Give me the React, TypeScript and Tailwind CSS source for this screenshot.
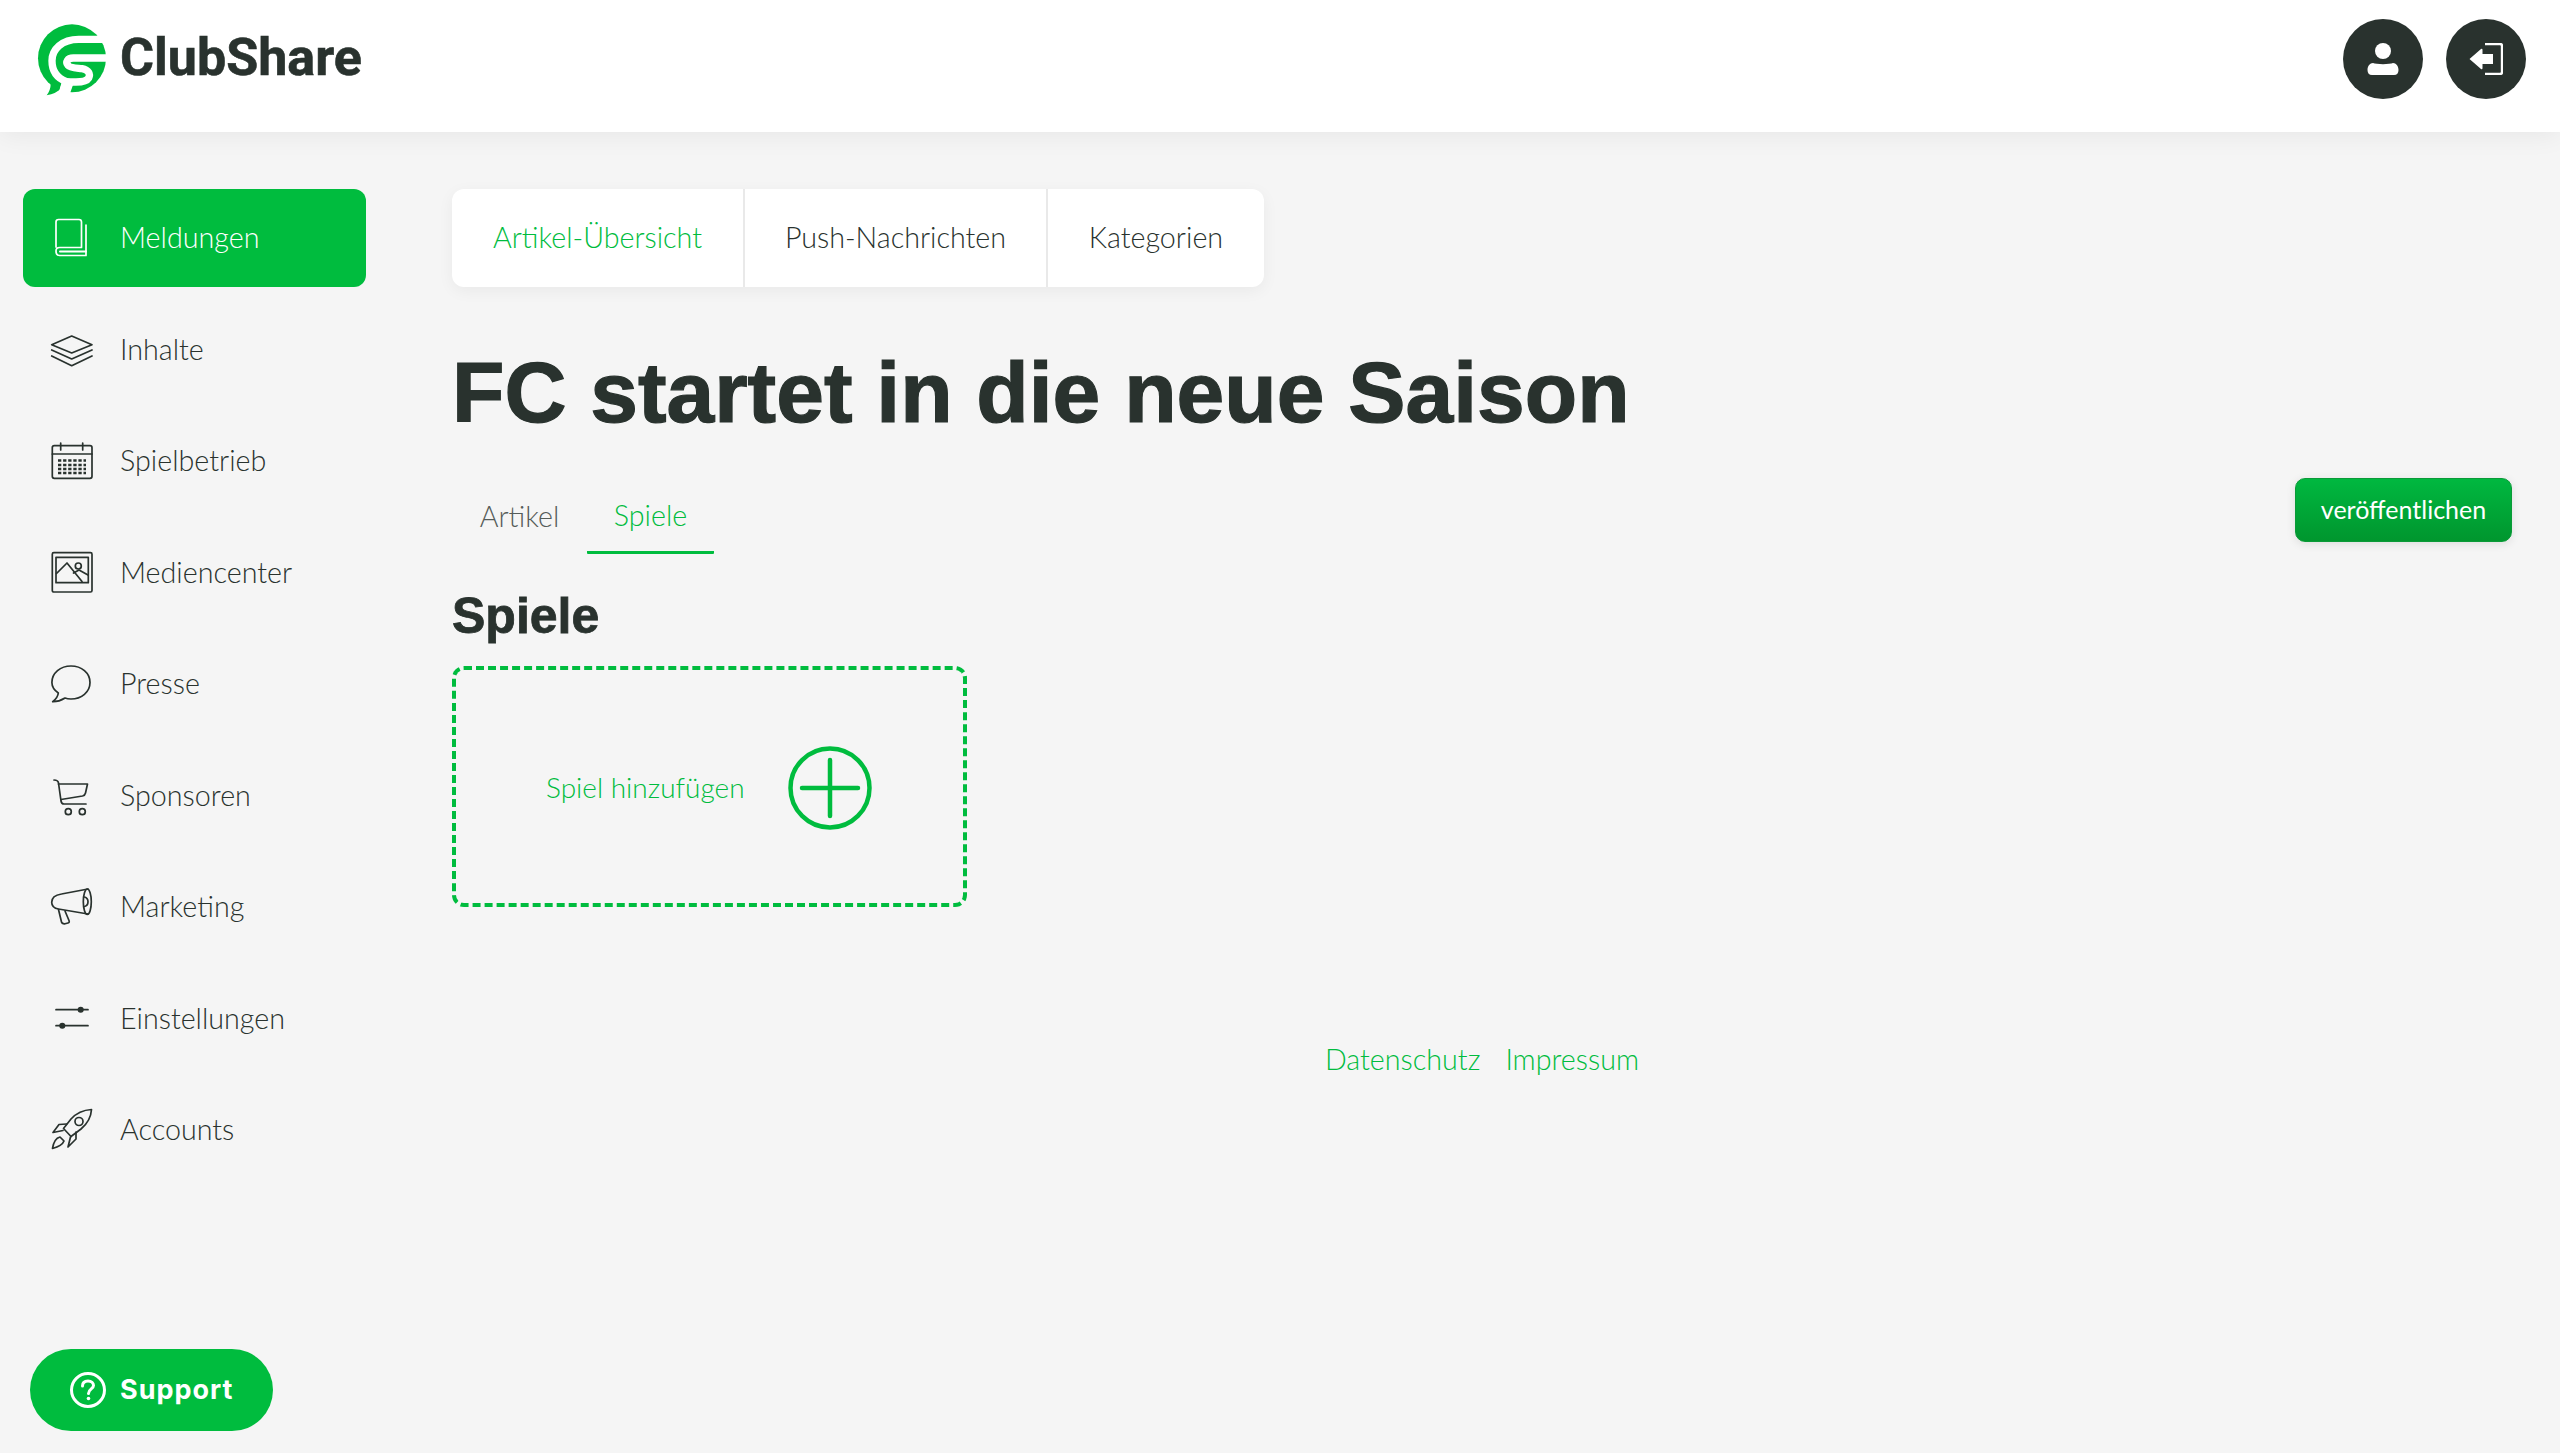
import React from "react";

const dark = "#29322e";

function Logo() {
  return (
    <svg width="100" height="100" viewBox="0 0 300 300" className="shrink-0">
      <circle cx="156" cy="145" r="102" fill="#00bc3e" />
      <path d="M118 205 L128 232 Q108 252 80 256 Q92 240 92 222 Z" fill="#00bc3e" />
      <g fill="none" stroke="#fff" strokeWidth="22">
        <path d="M270 88 H176 C126 88 96 118 96 152 C96 184 112 204 138 214 L124 262" />
        <path d="M270 144 H160 C142 144 136 156 144 166 C150 174 170 174 186 176 C206 180 212 192 206 204 C200 214 184 216 168 216 H138" />
      </g>
      <path d="M126 214 L112 262 H146 L160 222 Z" fill="#fff" />
    </svg>
  );
}

function Icon({ children, color }: { children: React.ReactNode; color: string }) {
  return (
    <svg width="44" height="44" viewBox="0 0 44 44" fill="none" stroke={color} strokeWidth="1.7" strokeLinejoin="round" strokeLinecap="round" className="shrink-0">
      {children}
    </svg>
  );
}

const icons: Record<string, React.ReactNode> = {
  Meldungen: (
    <>
      <path d="M6 31 V6 Q6 3.5 8.5 3.5 H29 Q31.500 3.500 31.500 6 V31.500 H9.500 Q6 31.500 6 35 Q6 39.500 9.500 39.500 H36 V9" />
      <path d="M10 35.500 H36" strokeWidth="2" />
    </>
  ),
  Inhalte: (
    <>
      <path d="M21.700 8 L42 16.700 L21.700 25 L1.700 16.700 Z" />
      <path d="M1.700 22 L21.700 31 L42 22" />
      <path d="M1.700 28 L21.700 37.700 L42 28" />
    </>
  ),
  Spielbetrieb: (
    <>
      <rect x="2.300" y="6.700" width="39.700" height="32.600" rx="2" />
      <path d="M2.300 15 H42" />
      <path d="M10.700 4 V11 M32.700 4 V11" />
      <path d="M8 21.500 H36 M8 26 H36 M8 30 H36 M8 34 H36" strokeWidth="2.400" strokeDasharray="3.300 1.800" strokeLinecap="butt" />
    </>
  ),
  Mediencenter: (
    <>
      <rect x="2.300" y="1.700" width="39.700" height="39.300" rx="1.500" />
      <rect x="6" y="6.300" width="32.300" height="25.400" />
      <path d="M6.500 22.500 L17 12 L32 30.500" />
      <path d="M23.500 22 L29 19 L38 24" />
      <circle cx="28.300" cy="15" r="3" />
    </>
  ),
  Presse: (
    <path d="M8.300 31 C4 28 1.900 24 1.900 20.500 C1.900 11 10.500 4 21 4 C31.500 4 40 11 40 20.500 C40 30 31.500 37 21 37 C19 37 17 36.800 15 36 C11 38.500 7 39.800 2.700 39.700 C5.500 37.500 8 34.500 8.300 31 Z" />
  ),
  Sponsoren: (
    <>
      <path d="M4 6 Q8 6 8.500 9 L11 27 Q11.500 30 14 30 H36" />
      <path d="M8.500 10 H37.500 L35.500 19 Q35 21.500 32.500 22 L11 25.500" />
      <circle cx="18.300" cy="37.700" r="3" />
      <circle cx="32.300" cy="37.700" r="3" />
    </>
  ),
  Marketing: (
    <>
      <path d="M38 4 L11.500 9 Q1.700 10.500 1.700 17.300 Q1.700 23 8.500 24 L38 29" />
      <ellipse cx="37.300" cy="16.700" rx="4" ry="12.700" />
      <path d="M34.500 12 Q38 13 38 16.700 Q38 20.500 34.500 21.500" />
      <path d="M8.500 24.500 L11.500 37 Q12 39 15 38.800 L18 38 Q19.800 37.500 19 35.500 L15 26" />
    </>
  ),
  Einstellungen: (
    <>
      <path d="M6 12.700 H38 M6 28.700 H38" />
      <circle cx="30.700" cy="12.700" r="2.200" fill={dark} />
      <circle cx="12.300" cy="28.700" r="2.200" fill={dark} />
    </>
  ),
  Accounts: (
    <>
      <path d="M41.500 1.500 C33 2 26 5.500 21 11 L13.500 20.500 L21 28.500 L31 21 C37 16 41 10 41.500 1.500 Z" />
      <circle cx="29" cy="13.500" r="4" />
      <path d="M16.500 16 L9 16.500 L3 24.500 L13 22.500" />
      <path d="M26 24 L26 31 L18 39 L20.500 29" />
      <path d="M10 29 C6 30 3.500 34 2.500 40.500 C8 39 12.500 37 14 33 Z" />
    </>
  ),
};

const items = ["Meldungen", "Inhalte", "Spielbetrieb", "Mediencenter", "Presse", "Sponsoren", "Marketing", "Einstellungen", "Accounts"];

function NavItem({ label, active }: { label: string; active?: boolean }) {
  return (
    <div className={`flex h-[98px] items-center rounded-[12px] pl-[27px] text-[28.700px] font-light ${active ? "bg-[#00bc3e] text-white" : "text-[#29322e]"}`}>
      <Icon color={active ? "#ffffff" : dark}>{icons[label]}</Icon>
      <span className="ml-[26px]">{label}</span>
    </div>
  );
}

export default function App() {
  return (
    <div className="relative flex h-screen flex-col overflow-hidden bg-[#f5f5f5] text-[#29322e] font-['Lato',sans-serif]">
      <header className="relative z-10 flex h-[132px] shrink-0 items-start justify-between bg-white pl-[20px] pr-[34px] shadow-[0_4px_24px_rgba(0,0,0,0.06)]">
        <div className="mt-[10px] flex h-[100px] items-center">
          <Logo />
          <span className="mb-[5px] font-['Roboto',sans-serif] text-[52px] font-bold text-[#29322e] [-webkit-text-stroke:0.6px_#29322e]">ClubShare</span>
        </div>
        <div className="mt-[19px] flex gap-[23px]">
          <div className="flex h-[80px] w-[80px] items-center justify-center rounded-full bg-[#29322e]">
            <svg width="32" height="34" viewBox="0 0 32 34" fill="#fff">
              <circle cx="16" cy="9" r="8" />
              <path d="M6 21 C9 22.500 23 22.500 26 21 C29 21 31.500 24 31.500 28 C31.500 31 30 33 27 33 H5 C2 33 .5 31 .5 28 C.5 24 3 21 6 21 Z" />
            </svg>
          </div>
          <div className="flex h-[80px] w-[80px] items-center justify-center rounded-full bg-[#29322e]">
            <svg width="34" height="32" viewBox="0 0 34 32" fill="#fff">
              <path d="M.5 16 L12 6 Q13.500 5 13.500 7 V11 H24 V21 H13.500 V25 Q13.500 27 12 26 Z" />
              <path d="M16 1 H31 Q33 1 33 3 V29 Q33 31 31 31 H16" fill="none" stroke="#fff" strokeWidth="2.400" />
            </svg>
          </div>
        </div>
      </header>

      <div className="flex min-h-0 flex-1">
        <nav className="flex w-[452px] shrink-0 flex-col gap-[13.500px] pl-[23px] pr-[86px] pt-[57px]">
          {items.map((l, i) => (
            <NavItem key={l} label={l} active={i === 0} />
          ))}
        </nav>

        <main className="flex min-w-0 flex-1 flex-col pr-[48px] pt-[57px]">
          <div className="flex h-[98px] w-[812px] rounded-[12px] bg-white text-[28.700px] font-light shadow-[0_4px_16px_rgba(0,0,0,0.05)]">
            <div className="flex w-[293px] items-center justify-center border-r-2 border-[#e9e9e9] text-[#00bc3e]">Artikel-Übersicht</div>
            <div className="flex w-[303px] items-center justify-center border-r-2 border-[#e9e9e9]">Push-Nachrichten</div>
            <div className="flex flex-1 items-center justify-center">Kategorien</div>
          </div>

          <h1 className="mt-[53px] h-[104px] font-['Liberation_Sans',sans-serif] text-[85.800px] font-bold leading-[104px] text-[#29322e] [-webkit-text-stroke:1.2px_#29322e]">FC startet in die neue Saison</h1>

          <div className="mt-[34px] flex items-start justify-between">
            <div className="flex text-[28.700px] font-light">
              <div className="flex h-[76px] w-[135px] items-center justify-center pt-[2px] text-[#555c59]">Artikel</div>
              <div className="flex h-[76px] w-[127px] items-center justify-center rounded-[1px] border-b-[3px] border-[#00bc3e] pt-[2px] text-[#00bc3e]">Spiele</div>
            </div>
            <button className="h-[64px] w-[217px] rounded-[10px] border border-[#0a9a38] bg-gradient-to-b from-[#00b840] to-[#00962e] text-[25px] text-white shadow-[0_2px_10px_rgba(0,0,0,0.1)]">veröffentlichen</button>
          </div>

          <h2 className="mt-[33px] font-['Liberation_Sans',sans-serif] text-[50px] font-bold leading-[58px] text-[#29322e] [-webkit-text-stroke:0.8px_#29322e]">Spiele</h2>

          <div className="mt-[21px] flex h-[241px] w-[515px] items-center rounded-[12px] border-4 border-dashed border-[#00bc3e] pl-[90px] text-[#00bc3e]">
            <span className="w-[242px] text-[28px] font-light">Spiel hinzufügen</span>
            <svg width="84" height="84" viewBox="0 0 84 84" fill="none" stroke="#00bc3e" strokeWidth="4.500" strokeLinecap="round" className="mt-[3px]">
              <circle cx="42" cy="42" r="39.500" />
              <path d="M14 42 H70 M42 14 V70" />
            </svg>
          </div>

          <div className="mt-[131px] flex justify-center gap-[25px] text-[28.700px] font-light text-[#00bc3e]">
            <span>Datenschutz</span>
            <span>Impressum</span>
          </div>
        </main>
      </div>

      <button className="absolute bottom-[22px] left-[30px] flex h-[82px] w-[243px] items-center rounded-full bg-[#00bc3e] pl-[39px] text-white">
        <svg width="38" height="38" viewBox="0 0 38 38" fill="none" stroke="#fff" strokeWidth="3">
          <circle cx="19" cy="19" r="16.500" />
          <path d="M13.500 15 C13.500 11.500 16 10 19 10 C22.500 10 24.500 12 24.500 14.500 C24.500 18 19.500 18 19.500 22.500" strokeLinecap="round" />
          <circle cx="19.500" cy="27.500" r="1.800" fill="#fff" stroke="none" />
        </svg>
        <span className="ml-[13px] font-['Inter',sans-serif] text-[27px] font-bold tracking-[1px]">Support</span>
      </button>
    </div>
  );
}
